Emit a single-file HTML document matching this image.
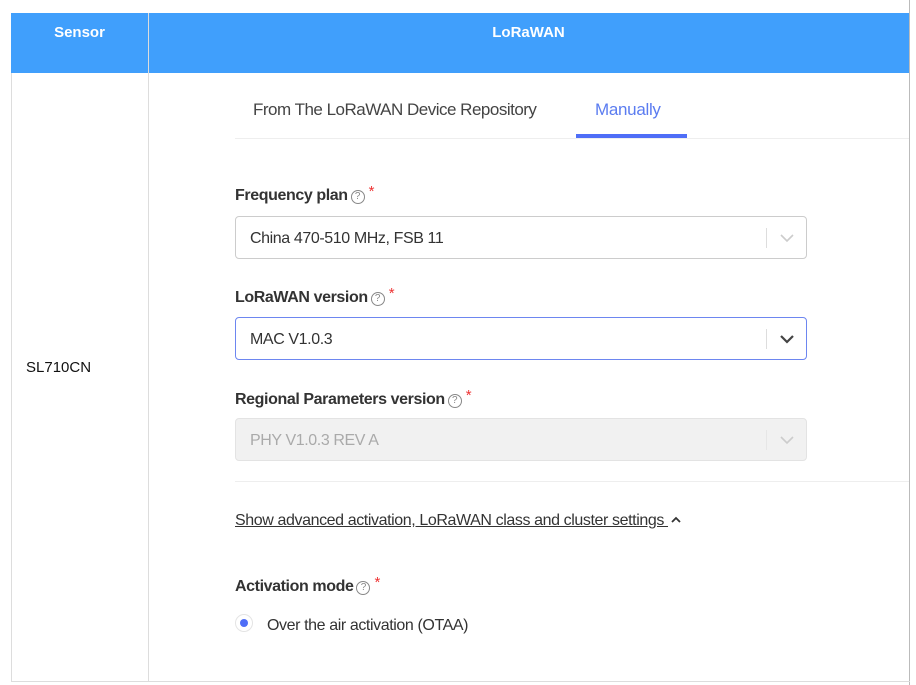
<!DOCTYPE html>
<html><head><style>
body{margin:0;background:#fff;font-family:"Liberation Sans",sans-serif;width:916px;height:685px;position:relative;overflow:hidden;color:#222}
.a{position:absolute}
.lbl{font-weight:bold;font-size:16px;color:#333;letter-spacing:-0.4px}
.q{display:inline-block;width:12px;height:12px;border:1px solid #888;border-radius:50%;font-size:10px;line-height:12px;text-align:center;color:#888;font-weight:normal;vertical-align:1px;margin-left:3px;letter-spacing:0}
.st{color:#e33;font-weight:normal;margin-left:4px;vertical-align:4px;font-size:15px}
.sel{position:absolute;left:235px;width:572px;height:43px;border:1px solid #ccc;border-radius:4px;box-sizing:border-box;font-size:16px;letter-spacing:-0.4px;line-height:44px;padding-left:14px;color:#333}
.sel .d{position:absolute;right:39px;top:11px;height:20px;border-left:1px solid #ddd}
.sel svg{position:absolute;right:11px;top:14px}
</style></head><body>
<div class="a" style="left:11px;top:13px;width:899px;height:60px;background:#409ffc"></div>
<div class="a" style="left:11px;top:73px;width:1px;height:608px;background:#ddd"></div>
<div class="a" style="left:148px;top:13px;width:1px;height:668px;background:#ddd"></div>
<div class="a" style="left:909px;top:0;width:1px;height:685px;background:#bbb"></div>
<div class="a" style="left:11px;top:681px;width:899px;height:1px;background:#ddd"></div>
<div class="a" style="left:11px;top:24px;width:137px;text-align:center;color:#fff;font-weight:bold;font-size:15px">Sensor</div>
<div class="a" style="left:148px;top:24px;width:761px;text-align:center;color:#fff;font-weight:bold;font-size:15px">LoRaWAN</div>
<div class="a" style="left:26px;top:359px;font-size:15px;color:#111">SL710CN</div>
<div class="a" style="left:253px;top:100px;font-size:17px;color:#444;letter-spacing:-0.5px">From The LoRaWAN Device Repository</div>
<div class="a" style="left:595px;top:100px;font-size:17px;color:#5b7cf0;letter-spacing:-0.3px">Manually</div>
<div class="a" style="left:235px;top:138px;width:674px;height:1px;background:#eee"></div>
<div class="a" style="left:576px;top:134px;width:111px;height:4px;background:#4f6ef7"></div>

<div class="a lbl" style="left:235px;top:183px">Frequency plan<span class="q">?</span><span class="st">*</span></div>
<div class="sel" style="top:216px">China 470-510 MHz, FSB 11<span class="d"></span><svg width="16" height="14"><path d="M2 4l6 6 6-6" fill="none" stroke="#ccc" stroke-width="1.6"/></svg></div>
<div class="a lbl" style="left:235px;top:285px">LoRaWAN version<span class="q">?</span><span class="st">*</span></div>
<div class="sel" style="top:317px;border-color:#6d86f0">MAC V1.0.3<span class="d"></span><svg width="16" height="14"><path d="M2 4l6 6 6-6" fill="none" stroke="#444" stroke-width="2.2"/></svg></div>
<div class="a lbl" style="left:235px;top:387px">Regional Parameters version<span class="q">?</span><span class="st">*</span></div>
<div class="sel" style="top:418px;background:#f1f1f1;border-color:#e3e3e3;color:#aaa">PHY V1.0.3 REV A<span class="d" style="border-color:#e6e6e6"></span><svg width="16" height="14"><path d="M2 4l6 6 6-6" fill="none" stroke="#ccc" stroke-width="1.6"/></svg></div>
<div class="a" style="left:235px;top:481px;width:674px;height:1px;background:#eee"></div>
<div class="a" style="left:235px;top:512px;font-size:16px;color:#333;text-decoration:underline;letter-spacing:-0.4px">Show advanced activation, LoRaWAN class and cluster settings <svg width="12" height="10" style="margin-left:2px"><path d="M2 7l4-4 4 4" fill="none" stroke="#333" stroke-width="1.8"/></svg></div>
<div class="a lbl" style="left:235px;top:574px">Activation mode<span class="q">?</span><span class="st">*</span></div>
<div class="a" style="left:235px;top:614px;width:18px;height:18px;border:1px solid #e4e4e4;border-radius:50%;box-sizing:border-box"></div>
<div class="a" style="left:240px;top:619px;width:8px;height:8px;border-radius:50%;background:#4f6ef7"></div>
<div class="a" style="left:267px;top:617px;font-size:16px;color:#333;letter-spacing:-0.4px">Over the air activation (OTAA)</div>
</body></html>
